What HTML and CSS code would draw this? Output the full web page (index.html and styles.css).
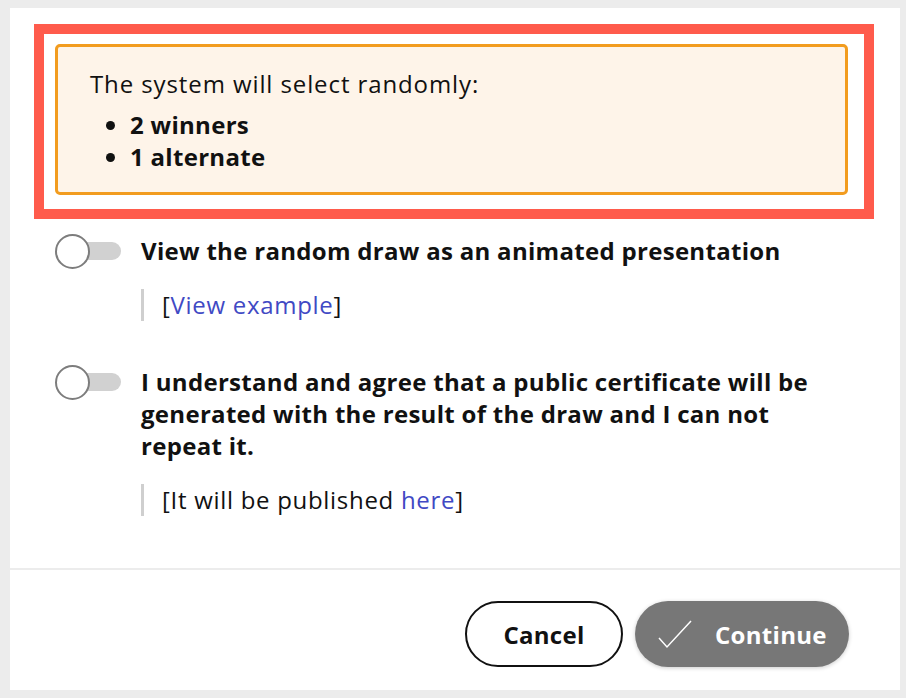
FILE: index.html
```html
<!doctype html>
<html>
    <head>
        <title>Random draw</title>
        <link rel="stylesheet" href="styles.css">
    </head>
    <body>
        <div class="panel">
            <div class="highlight">
                <div class="notice">
                    <p>The system will select randomly:</p>
                    <ul>
                        <li>2 winners</li>
                        <li>1 alternate</li>
                    </ul>
                </div>
            </div>
            <div class="option">
                <span class="toggle"><span class="knob"></span></span>
                <div class="option-body">
                    <p class="option-label">View the random draw as an animated presentation</p>
                    <p class="option-note">[<a href="#">View example</a>]</p>
                </div>
            </div>
            <div class="option">
                <span class="toggle"><span class="knob"></span></span>
                <div class="option-body">
                    <p class="option-label">I understand and agree that a public certificate will be generated with the result of the draw and I can not repeat it.</p>
                    <p class="option-note">[It will be published <a href="#">here</a>]</p>
                </div>
            </div>
        </div>
        <div class="footer">
            <button class="btn btn-cancel">Cancel</button>
            <button class="btn btn-continue">
                <svg width="36" height="30" viewBox="0 0 36 30"><path d="M2 19 L10 28 L34 2" fill="none" stroke="#fff" stroke-width="1.5"/></svg>
                Continue
            </button>
        </div>
    </body>
</html>
```

FILE: styles.css
```css
html, body {
    height: 100%;
}
body {
    --color-bg: #ececec;
    --color-text: #111;
    --color-link: #4149c4;
    box-sizing: border-box;
    margin: 0;
    padding: 8px 6px 8px 10px;
    display: flex;
    flex-direction: column;
    gap: 2px;
    background: var(--color-bg);
    color: var(--color-text);
    font-family: 'Open Sans', sans-serif;
    font-size: 24px;
    line-height: 32px;
    letter-spacing: 0.9px;
}
p {
    margin: 0;
}
.panel {
    flex: 1;
    background: #fff;
    padding: 16px 26px 0 24px;
}
.highlight {
    border: 10px solid #ff5b4c;
    padding: 10px 16px 14px 11px;
}
.notice {
    background: #fef4e9;
    border: 3px solid #f29c1f;
    border-radius: 5px;
    padding: 21px 32px 19px;
}
.notice ul {
    margin: 9px 0 0;
    padding-left: 40px;
    font-weight: bold;
    letter-spacing: 0.3px;
}
.option {
    display: flex;
    gap: 20px;
    margin: 16px 20px 0 21px;
}
.option + .option {
    margin-top: 45px;
}
.toggle {
    position: relative;
    flex: none;
    width: 66px;
    height: 18px;
    margin-top: 7px;
}
.toggle::before {
    content: "";
    position: absolute;
    left: 6px;
    right: 0;
    top: 0;
    bottom: 0;
    background: #d1d1d1;
    border-radius: 9px;
}
.knob {
    position: absolute;
    left: 0;
    top: -8px;
    width: 31px;
    height: 31px;
    border: 2px solid #7d7d7d;
    border-radius: 50%;
    background: #fff;
}
.option-label {
    font-weight: bold;
    letter-spacing: 0.3px;
}
.option-note {
    margin-top: 22px;
    border-left: 3px solid #cfcfcf;
    padding-left: 18px;
    letter-spacing: 0.7px;
}
.option-note a {
    color: var(--color-link);
    text-decoration: none;
}
.footer {
    flex: none;
    height: 120px;
    box-sizing: border-box;
    background: #fff;
    display: flex;
    justify-content: flex-end;
    gap: 12px;
    padding: 31px 51px 23px;
}
.btn {
    height: 66px;
    border-radius: 33px;
    font-family: inherit;
    font-size: 24px;
    font-weight: bold;
    letter-spacing: 0.3px;
    display: flex;
    align-items: center;
}
.btn-cancel {
    width: 158px;
    justify-content: center;
    background: #fff;
    border: 2px solid #111;
    color: #111;
}
.btn-continue {
    width: 214px;
    gap: 22px;
    padding: 0 22px;
    background: #777;
    border: none;
    color: #fff;
    box-shadow: 0 1px 4px rgba(0, 0, 0, 0.2);
}
```
